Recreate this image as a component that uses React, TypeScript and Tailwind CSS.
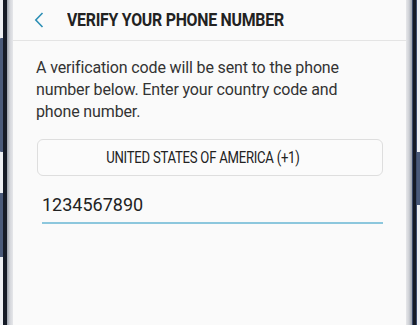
import React from "react";

export default function App() {
  return (
    <div
      className="w-[420px] h-[325px] flex bg-white overflow-hidden"
      style={{ fontFamily: "Roboto, 'Noto Sans', sans-serif" }}
    >
      {/* left frame */}
      <div className="w-[3px] h-full flex flex-col bg-[#eef0f4]">
        <div className="h-[38px]" />
        <div className="h-[114px] bg-[#4a5a7a] rounded-l-[1px]" />
        <div className="h-[41px]" />
        <div className="h-[64px] bg-[#4a5a7a]" />
      </div>
      <div className="w-[4px] h-full bg-[#151a26]" />
      <div className="w-[6px] h-full bg-gradient-to-r from-[#9aa0ab] via-[#d4d6db] to-[#e6e7ea]" />

      {/* screen */}
      <div className="flex-1 h-full bg-[#fafafa] flex flex-col">
        <div className="h-[41px] flex items-center border-b border-[#e4e4e4] shrink-0">
          <svg
            width="10"
            height="16"
            viewBox="0 0 10 16"
            className="ml-[21px]"
          >
            <path
              d="M8.5 1 L1.8 8 L8.5 15"
              fill="none"
              stroke="#2d8fb5"
              strokeWidth="1.6"
            />
          </svg>
          <div className="ml-[23px] text-[19px] font-bold text-[#222222] tracking-[-0.3px] whitespace-nowrap origin-left scale-x-[0.835]">
            VERIFY YOUR PHONE NUMBER
          </div>
        </div>
        <div className="px-[23px] pt-[16px]">
          <p className="text-[16px] leading-[22px] text-[#333333] tracking-[-0.14px]">
            A verification code will be sent to the phone
            <br />
            number below. Enter your country code and
            <br />
            phone number.
          </p>
          <div className="mt-[16px] ml-[1px] h-[37px] rounded-[6px] border border-[#dedede] bg-[#fbfbfb] flex items-center justify-center pr-[14px]">
            <span className="text-[16px] text-[#222222] whitespace-nowrap tracking-[-0.3px] scale-x-[0.82] origin-center inline-block">
              UNITED STATES OF AMERICA (+1)
            </span>
          </div>
          <div className="mt-[17px] ml-[6px] border-b-2 border-[#8cc7dd] pb-[5px]">
            <div className="text-[18px] leading-[24px] text-[#222222]">
              1234567890
            </div>
          </div>
        </div>
      </div>

      <div className="w-[6px] h-full bg-gradient-to-r from-[#e6e7ea] via-[#cfd1d6] to-[#9aa0ab]" />
      <div className="w-[5px] h-full bg-[#151a26] border-x border-[#3b4a6a]" />
      <div className="w-[3px] h-full flex flex-col bg-[#eef0f4]">
        <div className="h-[152px]" />
        <div className="h-[53px] bg-[#4a5a7a]" />
      </div>
    </div>
  );
}
